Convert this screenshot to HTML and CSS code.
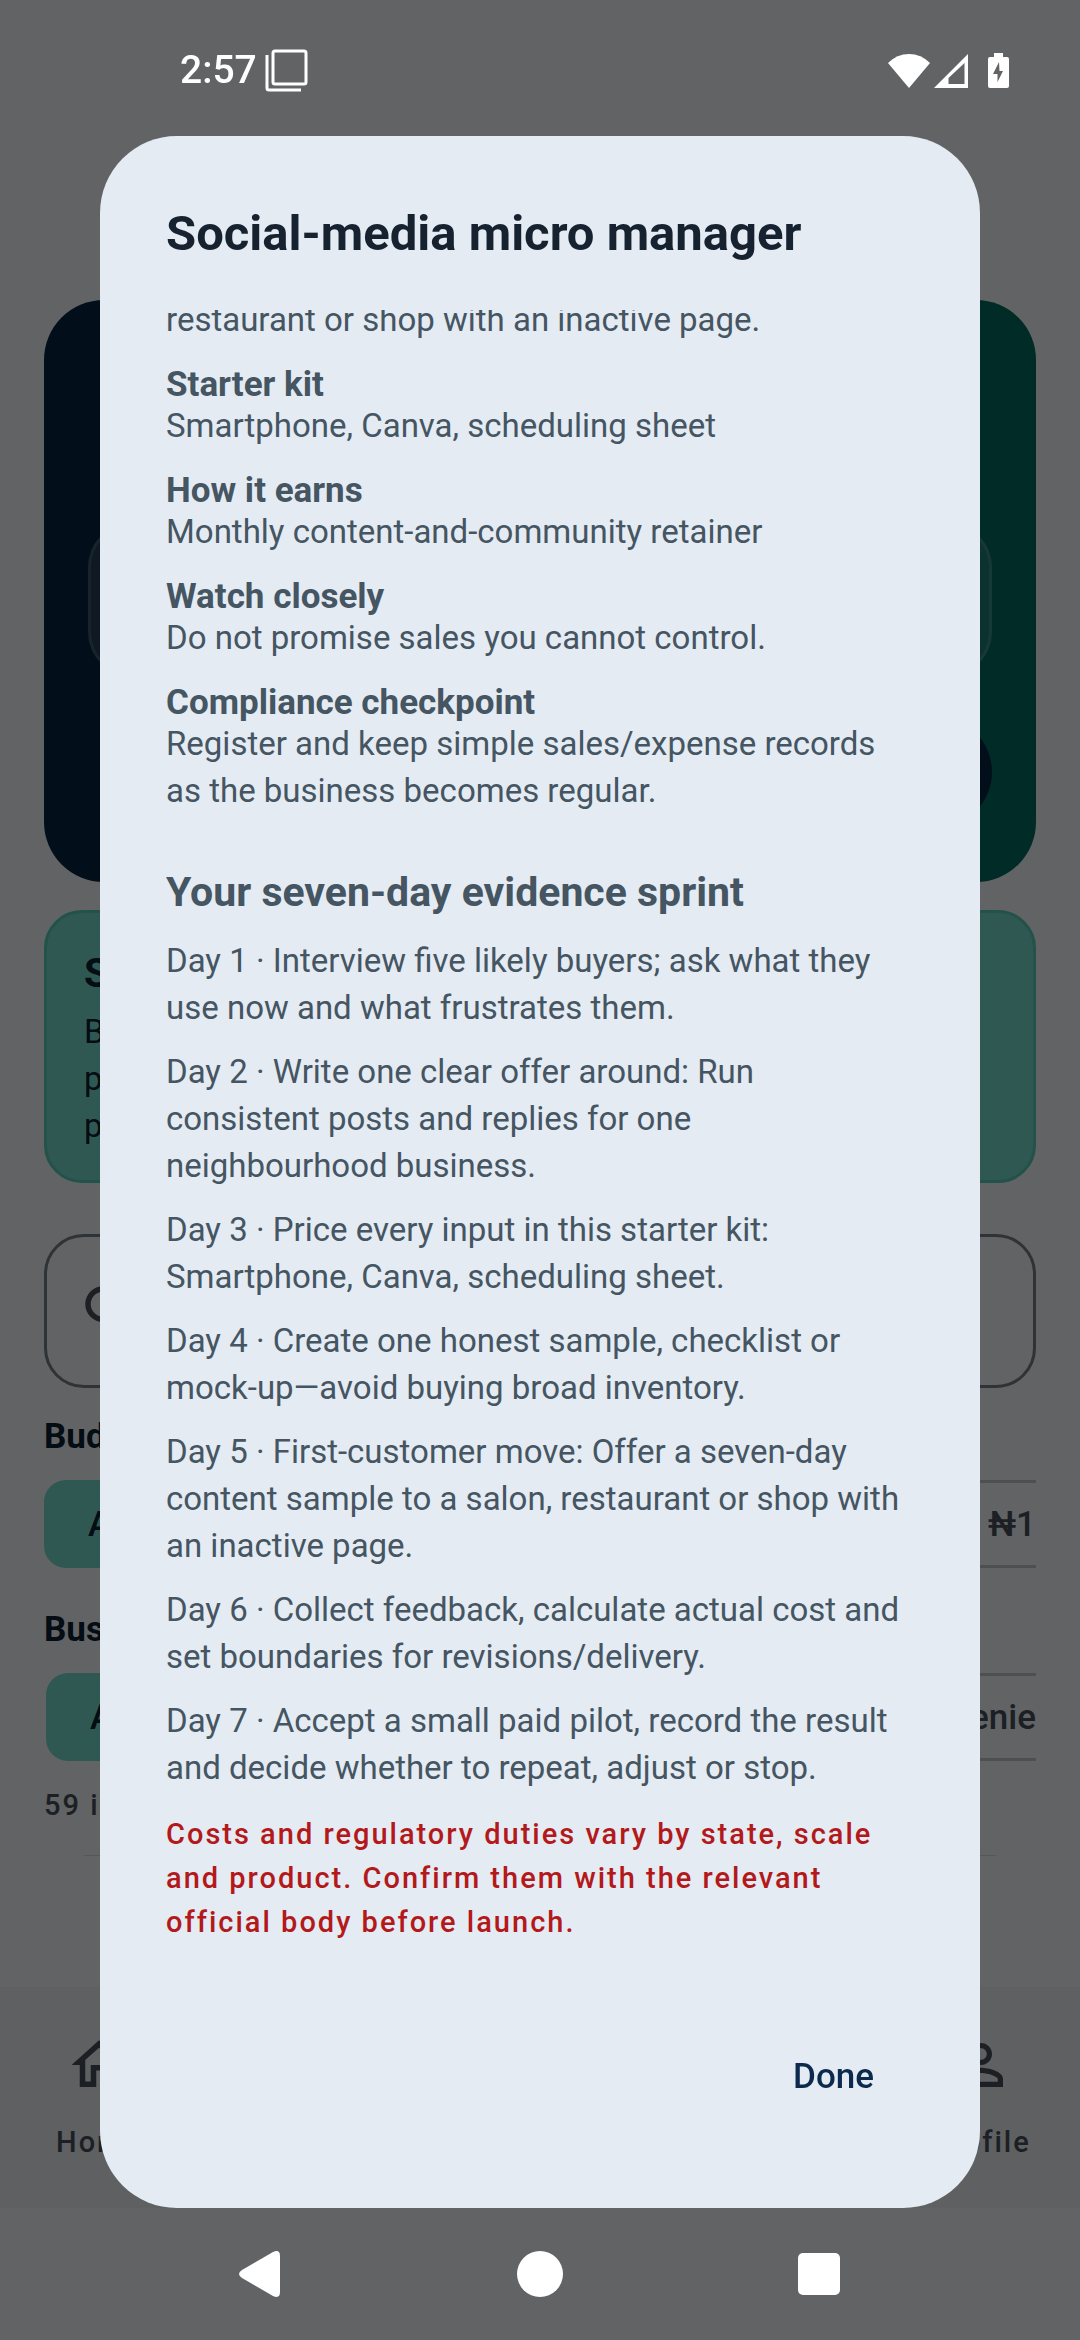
FILE: index.html
```html
<!DOCTYPE html>
<html lang="en">
<head>
  <meta charset="UTF-8">
  <meta name="viewport" content="width=device-width, initial-scale=1.0">
  <title>Social-media micro manager</title>
  <link rel="stylesheet" href="styles.css">
</head>
<body>
  <div class="app">
    <main class="content">
      <section class="hero">
        <div class="hero-panel"></div>
        <div class="hero-action"></div>
      </section>

      <section class="tip-card">
        <h2>S</h2>
        <p>B<br>p<br>p</p>
      </section>

      <div class="search-box">
        <svg class="icon" viewBox="0 0 24 24" aria-hidden="true"><path d="M15.5 14h-.79l-.28-.27A6.47 6.47 0 0 0 16 9.5 6.5 6.5 0 1 0 9.5 16c1.61 0 3.09-.59 4.23-1.57l.27.28v.79l5 4.99L20.49 19l-4.99-5zm-6 0a4.5 4.5 0 1 1 0-9 4.5 4.5 0 0 1 0 9z"/></svg>
        <input type="search" aria-label="Search ideas">
      </div>

      <h3 class="filter-label">Budget</h3>
      <div class="chips">
        <button class="chip selected">All</button>
        <button class="chip cut">₦1</button>
      </div>

      <h3 class="filter-label">Business</h3>
      <div class="chips indent">
        <button class="chip selected">All</button>
        <button class="chip cut">enie</button>
      </div>

      <p class="count">59 ideas</p>
      <hr class="divider">
    </main>

    <nav class="tabs">
      <a class="tab" href="#home">
        <svg class="icon" viewBox="0 0 24 24" aria-hidden="true"><path d="M12 5.69l5 4.5V18h-2v-6H9v6H7v-7.81l5-4.5M12 3L2 12h3v8h6v-6h2v6h6v-8h3L12 3z"/></svg>
        Home
      </a>
      <a class="tab" href="#profile">
        <svg class="icon" viewBox="0 0 24 24" aria-hidden="true"><path d="M12 5.9c1.16 0 2.1.94 2.1 2.1s-.94 2.1-2.1 2.1S9.9 9.16 9.9 8s.94-2.1 2.1-2.1m0 9c2.97 0 6.1 1.46 6.1 2.1v1.1H5.9V17c0-.64 3.13-2.1 6.1-2.1M12 4C9.79 4 8 5.79 8 8s1.79 4 4 4 4-1.79 4-4-1.79-4-4-4zm0 9c-2.67 0-8 1.34-8 4v3h16v-3c0-2.66-5.33-4-8-4z"/></svg>
        Profile
      </a>
    </nav>
  </div>

  <div class="overlay">
    <header class="status-bar">
      <span class="clock">2:57</span>
      <svg class="status-copy" viewBox="0 0 43 43" aria-hidden="true"><rect x="8" y="2" width="33" height="33" rx="2"/><path d="M2 6v33q0 2 2 2h32"/></svg>
      <span class="spacer"></span>
      <svg class="status-wifi" viewBox="0 0 42 34" aria-hidden="true"><path d="M21 34L0 9Q9 0 21 0t21 9z"/></svg>
      <svg class="status-signal" viewBox="0 0 34 34" aria-hidden="true"><path fill-rule="evenodd" d="M34 0v34H0zM30.500 9L14.500 24v6h16z"/></svg>
      <svg class="status-battery" viewBox="0 0 21 35" aria-hidden="true"><path fill-rule="evenodd" d="M6 0h9v4h4q2 0 2 2v27q0 2-2 2H2q-2 0-2-2V6q0-2 2-2h4zM11 9L5 21h4.500v8L15 18h-3.500z"/></svg>
    </header>

    <div class="dialog" role="dialog" aria-modal="true" aria-labelledby="dialog-title">
      <h1 id="dialog-title">Social-media micro manager</h1>

      <div class="dialog-body">
        <p>restaurant or shop with an inactive page.</p>

        <div class="fact">
          <h3>Starter kit</h3>
          <p>Smartphone, Canva, scheduling sheet</p>
        </div>
        <div class="fact">
          <h3>How it earns</h3>
          <p>Monthly content-and-community retainer</p>
        </div>
        <div class="fact">
          <h3>Watch closely</h3>
          <p>Do not promise sales you cannot control.</p>
        </div>
        <div class="fact">
          <h3>Compliance checkpoint</h3>
          <p>Register and keep simple sales/expense records as the business becomes regular.</p>
        </div>

        <h2>Your seven-day evidence sprint</h2>
        <div class="days">
          <p>Day 1 · Interview five likely buyers; ask what they use now and what frustrates them.</p>
          <p>Day 2 · Write one clear offer around: Run consistent posts and replies for one neighbourhood business.</p>
          <p>Day 3 · Price every input in this starter kit: Smartphone, Canva, scheduling sheet.</p>
          <p>Day 4 · Create one honest sample, checklist or mock-up—avoid buying broad inventory.</p>
          <p>Day 5 · First-customer move: Offer a seven-day content sample to a salon, restaurant or shop with an inactive page.</p>
          <p>Day 6 · Collect feedback, calculate actual cost and set boundaries for revisions/delivery.</p>
          <p>Day 7 · Accept a small paid pilot, record the result and decide whether to repeat, adjust or stop.</p>
        </div>
        <p class="warning">Costs and regulatory duties vary by state, scale and product. Confirm them with the relevant official body before launch.</p>
      </div>

      <div class="dialog-actions">
        <button class="done">Done</button>
      </div>
    </div>

    <footer class="system-nav">
      <button aria-label="Back"><svg viewBox="0 0 48 48" aria-hidden="true"><path d="M5 20L36 2q7-3 7 4v36q0 7-7 4L5 28q-6-4 0-8z"/></svg></button>
      <button aria-label="Home"><svg viewBox="0 0 48 48" aria-hidden="true"><circle cx="24" cy="24" r="23"/></svg></button>
      <button aria-label="Recents"><svg viewBox="0 0 48 48" aria-hidden="true"><rect x="3" y="3" width="42" height="42" rx="5"/></svg></button>
    </footer>
  </div>
</body>
</html>
```

FILE: styles.css
```css
* {
  box-sizing: border-box;
}
body {
  margin: 0;
  font-family: Roboto, sans-serif;
  font-size: 33px;
  line-height: 47px;
  background-color: #f5f7fa;
  color: #0a2032;
}
h1, h2, h3, p {
  margin: 0;
}
button {
  font-family: inherit;
  border: none;
  background: none;
  cursor: pointer;
}
.icon {
  width: 66px;
  height: 66px;
  flex-shrink: 0;
  fill: #46505a;
}

/* Page behind the dialog */
.app {
  display: flex;
  flex-direction: column;
  height: 100vh;
  padding-bottom: 132px;
  overflow: hidden;
}
.content {
  flex: 1;
  padding: 300px 44px 0;
}
.hero {
  display: flex;
  flex-direction: column;
  align-items: flex-end;
  justify-content: flex-end;
  gap: 41px;
  height: 582px;
  padding: 0 44px 55px;
  border-radius: 60px;
  background: linear-gradient(90deg, #052641 10%, #026b62 90%);
}
.hero-panel {
  width: 100%;
  height: 153px;
  border: 3px solid rgba(255, 255, 255, 0.12);
  border-radius: 44px;
  background-color: rgba(255, 255, 255, 0.12);
}
.hero-action {
  width: 320px;
  height: 110px;
  border-radius: 55px;
  background-color: #052641;
}
.tip-card {
  margin-top: 28px;
  padding: 33px 37px 31px;
  border: 3px solid #55cdba;
  border-radius: 38px;
  background-color: #76dccd;
}
.tip-card h2 {
  margin-bottom: 7px;
  font-size: 40px;
  line-height: 55px;
}
.search-box {
  display: flex;
  align-items: center;
  height: 154px;
  margin-top: 51px;
  padding: 0 30px;
  border: 3px solid #73808c;
  border-radius: 40px;
}
.search-box input {
  flex: 1;
  min-width: 0;
  border: none;
  background: none;
  font: inherit;
}
.filter-label {
  margin-top: 25px;
  font-size: 35px;
  line-height: 47px;
}
.chips {
  display: flex;
  margin-top: 20px;
  overflow: hidden;
}
.indent {
  padding-left: 2px;
}
.chips + .filter-label {
  margin-top: 38px;
}
.chip {
  height: 88px;
  padding: 0 44px;
  border-radius: 22px;
  font-size: 35px;
  font-weight: 500;
  color: #46505a;
}
.chip.selected {
  background-color: #76dccd;
  color: #0a2032;
}
.chip.cut {
  flex: 1;
  margin-left: 22px;
  padding-right: 0;
  border: 3px solid #c1c8cb;
  border-right: none;
  border-radius: 22px 0 0 22px;
  text-align: right;
}
.count {
  margin-top: 22px;
  font-size: 29px;
  line-height: 44px;
  font-weight: 500;
  letter-spacing: 2px;
  color: #46505a;
}
.divider {
  margin: 28px 40px 0;
  border: none;
  border-top: 1px solid #d5dadf;
}
.tabs {
  display: flex;
  justify-content: space-between;
  height: 221px;
  background-color: #ebf1f3;
}
.tab {
  display: flex;
  flex-direction: column;
  align-items: center;
  gap: 22px;
  width: 198px;
  padding-top: 45px;
  font-size: 29px;
  line-height: 44px;
  font-weight: 500;
  letter-spacing: 2px;
  text-decoration: none;
  color: #46505a;
}

/* Scrim with the dialog and the system bars */
.overlay {
  position: fixed;
  inset: 0;
  display: flex;
  flex-direction: column;
  background-color: rgba(0, 0, 0, 0.6);
}
.status-bar {
  display: flex;
  align-items: center;
  height: 136px;
  padding: 5px 71px 0 180px;
  flex-shrink: 0;
}
.status-bar svg {
  fill: #ffffff;
}
.clock {
  font-size: 39px;
  font-weight: 500;
  color: #ffffff;
}
.spacer {
  flex: 1;
}
.status-bar .status-copy {
  width: 43px;
  height: 43px;
  margin-left: 8px;
  fill: none;
  stroke: #ffffff;
  stroke-width: 3;
}
.status-wifi {
  width: 42px;
  height: 34px;
}
.status-signal {
  width: 34px;
  height: 34px;
  margin-left: 4px;
}
.status-battery {
  width: 21px;
  height: 35px;
  margin-left: 20px;
}
.dialog {
  display: flex;
  flex-direction: column;
  flex: 1;
  min-height: 0;
  margin: 0 100px;
  padding: 66px;
  border-radius: 77px;
  background-color: #e4ebf3;
  color: #455562;
}
.dialog h1 {
  margin-bottom: 44px;
  font-size: 49px;
  line-height: 64px;
  color: #172230;
}
/* Scrolled to its end, so the first lines are cut at the top */
.dialog-body {
  display: flex;
  flex-direction: column;
  justify-content: flex-end;
  flex: 1;
  min-height: 0;
  overflow: hidden;
}
.fact {
  margin-top: 25px;
}
.fact h3 {
  font-size: 35px;
  line-height: 34px;
}
.dialog-body h2 {
  margin: 55px 0 21px;
  font-size: 41px;
  line-height: 47px;
}
.days {
  display: flex;
  flex-direction: column;
  gap: 17px;
}
.warning {
  margin-top: 21px;
  font-size: 29px;
  line-height: 44px;
  font-weight: 500;
  letter-spacing: 2px;
  color: #b3191a;
}
.dialog-actions {
  display: flex;
  justify-content: flex-end;
  margin-top: 66px;
}
.done {
  height: 132px;
  padding: 0 40px;
  font-size: 35px;
  font-weight: 500;
  color: #0b2a4d;
}
.system-nav {
  display: flex;
  justify-content: center;
  align-items: center;
  gap: 231px;
  height: 132px;
  flex-shrink: 0;
}
.system-nav button {
  width: 48px;
  height: 48px;
  padding: 0;
}
.system-nav svg {
  display: block;
  fill: #ffffff;
}
```
